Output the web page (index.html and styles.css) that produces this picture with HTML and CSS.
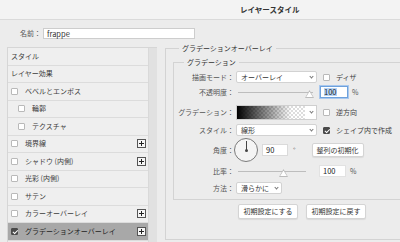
FILE: index.html
```html
<!DOCTYPE html>
<html lang="ja">
<head>
    <meta charset="UTF-8">
    <meta name="viewport" content="width=device-width, initial-scale=1.0">
    <title>レイヤースタイル</title>
    <link rel="stylesheet" href="styles.css">
</head>
<body>
    <div class="titlebar"><span class="title">レイヤースタイル</span></div>

    <div class="name-row">
        <span class="name-label">名前：</span>
        <div class="field name-field">frappe</div>
    </div>

    <div class="main">
        <div class="sidebar">
            <ul class="effects">
                <li class="effect plain">スタイル</li>
                <li class="effect plain">レイヤー効果</li>
                <li class="effect"><span class="cb"></span>ベベルとエンボス</li>
                <li class="effect sub"><span class="cb"></span>輪郭</li>
                <li class="effect sub"><span class="cb"></span>テクスチャ</li>
                <li class="effect"><span class="cb"></span>境界線<span class="plus"></span></li>
                <li class="effect"><span class="cb"></span>シャドウ (内側)<span class="plus"></span></li>
                <li class="effect"><span class="cb"></span>光彩 (内側)</li>
                <li class="effect"><span class="cb"></span>サテン</li>
                <li class="effect"><span class="cb"></span>カラーオーバーレイ<span class="plus"></span></li>
                <li class="effect selected"><span class="cb checked"></span>グラデーションオーバーレイ<span class="plus"></span></li>
            </ul>
            <div class="scroll-track"></div>
        </div>

        <div class="content">
            <fieldset class="group outer">
                <legend>グラデーションオーバーレイ</legend>
                <fieldset class="group inner">
                    <legend>グラデーション</legend>

                    <div class="row r-mode">
                        <span class="label">描画モード：</span>
                        <div class="select w-wide"><span>オーバーレイ</span><span class="chev"></span></div>
                        <span class="cb gap-cb"></span><span>ディザ</span>
                    </div>

                    <div class="row r-opacity">
                        <span class="label">不透明度：</span>
                        <div class="slider s-opacity"><span class="thumb"></span></div>
                        <div class="field num focus"><span class="sel">100</span></div>
                        <span class="unit">%</span>
                    </div>

                    <div class="row r-gradient">
                        <span class="label">グラデーション：</span>
                        <div class="gradient-pick"><span class="ramp"></span><span class="chev"></span></div>
                        <span class="cb gap-cb"></span><span>逆方向</span>
                    </div>

                    <div class="row r-style">
                        <span class="label">スタイル：</span>
                        <div class="select w-wide"><span>線形</span><span class="chev"></span></div>
                        <span class="cb checked gap-cb"></span><span>シェイプ内で作成</span>
                    </div>

                    <div class="row r-angle">
                        <span class="label">角度：</span>
                        <div class="dial"><span class="hand"></span></div>
                        <div class="field num angle">90</div>
                        <span class="deg">°</span>
                        <button class="btn reset-align">整列の初期化</button>
                    </div>

                    <div class="row r-scale">
                        <span class="label">比率：</span>
                        <div class="slider s-scale"><span class="thumb"></span></div>
                        <div class="field num plainnum">100</div>
                        <span class="unit">%</span>
                    </div>

                    <div class="row r-method">
                        <span class="label">方法：</span>
                        <div class="select w-short"><span>滑らかに</span><span class="chev"></span></div>
                    </div>
                </fieldset>

                <div class="actions">
                    <button class="btn">初期設定にする</button>
                    <button class="btn">初期設定に戻す</button>
                </div>
            </fieldset>
        </div>
    </div>
</body>
</html>
```

FILE: styles.css
```css
* {
    box-sizing: border-box;
}
html, body {
    margin: 0;
    padding: 0;
}
body {
    width: 400px;
    height: 242px;
    overflow: hidden;
    background: #ececec;
    font-family: "Noto Sans CJK JP", "Noto Sans", sans-serif;
    font-size: 7px;
    line-height: 1;
    color: #3c3c3c;
}

/* title bar */
.titlebar {
    height: 20px;
    padding-left: 240px;
    display: flex;
    align-items: center;
    background: #f3f3f3;
    border-bottom: 1px solid #dadada;
}
.title {
    font-size: 7.5px;
    font-weight: bold;
    color: #333;
}

/* name */
.name-row {
    height: 27px;
    display: flex;
    align-items: center;
}
.name-label {
    width: 43px;
    padding-right: 2px;
    text-align: right;
    color: #555;
}
.field {
    background: #fff;
    border: 1px solid #cdcdcd;
    display: flex;
    align-items: center;
}
.name-field {
    width: 152px;
    height: 11px;
    padding-left: 3px;
    font-size: 7.5px;
    color: #333;
}

/* layout */
.main {
    display: flex;
    padding-left: 7px;
}
.sidebar {
    flex: none;
    width: 150px;
    height: 200px;
    display: flex;
    border: 1px solid #d6d6d6;
    border-right: none;
}
.effects {
    list-style: none;
    margin: 0;
    padding: 0;
    flex: 1;
}
.effect {
    height: 17.5px;
    display: flex;
    align-items: center;
    padding-left: 3px;
    padding-right: 2px;
    background: #efefef;
    border-bottom: 1px solid #dcdcdc;
    white-space: nowrap;
}
.effect .cb {
    margin-right: 7px;
}
.effect.sub {
    padding-left: 10px;
}
.effect.selected {
    background: #a8a8a8;
    color: #222;
}
.scroll-track {
    width: 9px;
    background: #e1e1e1;
    border-left: 1px solid #d9d9d9;
}

/* checkbox */
.cb {
    width: 7px;
    height: 7px;
    flex: none;
    background: #fff;
    border: 1px solid #b9b9b9;
    border-radius: 1px;
    position: relative;
}
.cb.checked {
    background: #4a4a4a;
    border-color: #4a4a4a;
}
.cb.checked::after {
    content: "";
    position: absolute;
    left: 1.5px;
    top: 0;
    width: 2px;
    height: 3.5px;
    border: solid #fff;
    border-width: 0 1px 1px 0;
    transform: rotate(45deg);
}

/* plus button */
.plus {
    flex: none;
    margin-left: auto;
    width: 9px;
    height: 9px;
    border: 1px solid #555;
    background: #f6f6f6;
    position: relative;
}
.plus::before, .plus::after {
    content: "";
    position: absolute;
    background: #222;
}
.plus::before {
    left: 1px;
    top: 3px;
    width: 5px;
    height: 1px;
}
.plus::after {
    left: 3px;
    top: 1px;
    width: 1px;
    height: 5px;
}

/* right side groups */
.content {
    flex: 1;
    min-width: 0;
    margin-left: 8px;
}
.group {
    margin: 0;
    min-width: 0;
    border: 1px solid #d3d3d3;
    border-right: none;
}
.group legend {
    padding: 0 3px;
    line-height: 9px;
    color: #333;
}
.outer {
    height: 196px;
    margin-top: -3px;
    padding: 0 0 0 7px;
}
.outer > legend {
    margin-left: 6px;
}
.inner {
    margin-top: 5px;
    padding: 4px 0 5px 0;
}
.inner > legend {
    margin-left: 10px;
}

/* rows */
.row {
    display: flex;
    align-items: center;
    height: 12px;
    white-space: nowrap;
}
.label {
    width: 62px;
    flex: none;
    text-align: right;
    padding-right: 2px;
    color: #555;
}
.r-opacity { margin-top: 3px; }
.r-gradient { margin-top: 7px; height: 15px; }
.r-style { margin-top: 4px; }
.r-angle { margin-top: 2px; height: 24px; }
.r-scale { margin-top: 3px; }
.r-method { margin-top: 5px; }

.select {
    flex: none;
    height: 12px;
    display: flex;
    align-items: center;
    padding-left: 4px;
    background: #fff;
    border: 1px solid #d2d2d2;
    border-radius: 2px;
    color: #333;
}
.w-wide { width: 81px; }
.w-short { width: 46px; }
.chev {
    margin-left: auto;
    margin-right: 3px;
    width: 3px;
    height: 3px;
    border: solid #777;
    border-width: 0 1px 1px 0;
    transform: translateY(-1px) rotate(45deg);
}
.gap-cb {
    margin-left: 6px;
    margin-right: 6px;
}

.slider {
    flex: none;
    height: 12px;
    margin-left: 2px;
    position: relative;
    border-bottom: 1px solid #bdbdbd;
    transform: translateY(-5px);
}
.s-opacity { width: 75px; }
.s-scale { width: 68px; }
.thumb {
    position: absolute;
    bottom: -6px;
    width: 9px;
    height: 8px;
    background: #bbb;
    clip-path: polygon(50% 0, 100% 100%, 0 100%);
}
.thumb::after {
    content: "";
    position: absolute;
    left: 1px;
    top: 1.6px;
    width: 7px;
    height: 5.6px;
    background: #fff;
    clip-path: polygon(50% 0, 100% 100%, 0 100%);
}
.s-opacity .thumb { left: 67px; }
.s-scale .thumb { left: 41px; }

.num {
    flex: none;
    height: 12px;
    padding-left: 3px;
    font-size: 7.5px;
    color: #222;
}
.focus {
    width: 28px;
    margin-left: 7px;
    border: 1px solid #6ea1dc;
    box-shadow: 0 0 0 1px #a9c8ee;
}
.sel {
    background: #b5d3f5;
}
.unit {
    margin-left: 4px;
    color: #555;
}
.plainnum {
    width: 27px;
    margin-left: 13px;
    border-color: #e2e2e2;
}

.gradient-pick {
    flex: none;
    width: 81px;
    height: 15px;
    display: flex;
    align-items: center;
    border: 1px solid #cfcfcf;
    background: #fff;
}
.ramp {
    width: 68px;
    height: 100%;
    background:
        linear-gradient(90deg, #000 0%, rgba(0,0,0,0.55) 35%, rgba(0,0,0,0) 80%),
        repeating-conic-gradient(#ddd 0 25%, #fff 0 50%) 0 0 / 4px 4px;
}

.dial {
    flex: none;
    width: 24px;
    height: 24px;
    margin-left: -2px;
    border: 1px solid #7a7a7a;
    border-radius: 50%;
    background: #f4f4f4;
    position: relative;
}
.hand {
    position: absolute;
    left: 10.5px;
    top: 2px;
    width: 1px;
    height: 9.5px;
    background: #444;
}
.hand::after {
    content: "";
    position: absolute;
    left: -1px;
    bottom: -1px;
    width: 3px;
    height: 3px;
    border-radius: 50%;
    background: #444;
}
.angle {
    width: 26px;
    margin-left: 4px;
    border-color: #dadada;
}
.deg {
    margin-left: 5px;
    color: #555;
}

.btn {
    flex: none;
    font-family: inherit;
    font-size: 7px;
    line-height: 1;
    color: #333;
    background: #fff;
    border: 1px solid #d4d4d4;
    border-radius: 2px;
    box-shadow: 0 1px 1px rgba(0,0,0,0.08);
    padding: 0;
    height: 15px;
}
.reset-align {
    width: 52px;
    height: 14px;
    margin-left: 16px;
}
.actions {
    display: flex;
    gap: 8px;
    padding-left: 65px;
    margin-top: 4px;
}
.actions .btn {
    width: 60px;
}
```
